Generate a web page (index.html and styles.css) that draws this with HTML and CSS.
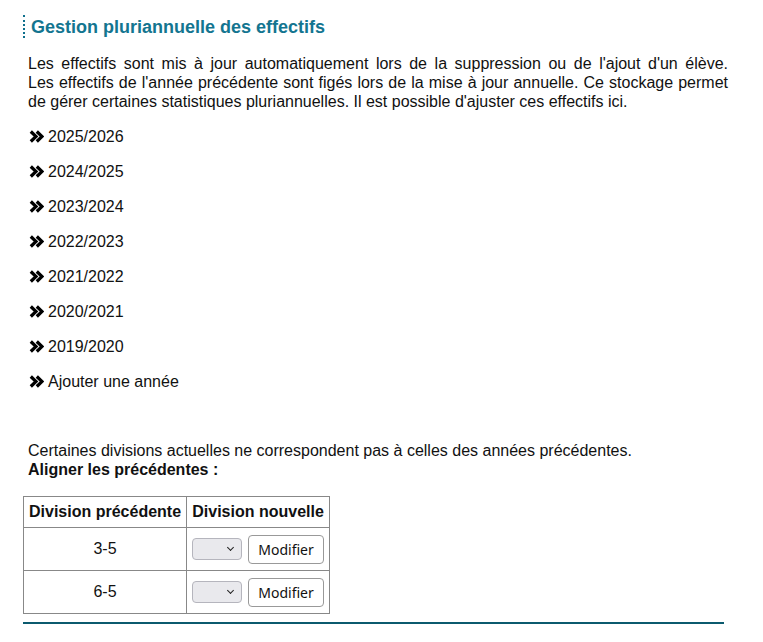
FILE: index.html
```html
<!DOCTYPE html>
<html>

<head>
  <meta charset="utf-8">
  <meta name="viewport" content="width=device-width, initial-scale=1">
  <title>Gestion pluriannuelle des effectifs</title>
  <link rel="stylesheet" href="styles.css">
</head>

<body>
  <div class="panel">
    <h2 class="titre">Gestion pluriannuelle des effectifs</h2>

    <div class="intro">
      <span class="ligne1">Les effectifs sont mis à jour automatiquement lors de la suppression ou de l'ajout d'un élève.</span>
      Les effectifs de l'année précédente sont figés lors de la mise à jour annuelle. Ce stockage permet
      de gérer certaines statistiques pluriannuelles. Il est possible d'ajuster ces effectifs ici.
    </div>

    <ul class="annees">
      <li><svg class="chev" viewBox="0 0 15 13"><path d="M1.8 1.5 7 6.5 1.8 11.5M7.8 1.5 13 6.5 7.8 11.5"/></svg>2025/2026</li>
      <li><svg class="chev" viewBox="0 0 15 13"><path d="M1.8 1.5 7 6.5 1.8 11.5M7.8 1.5 13 6.5 7.8 11.5"/></svg>2024/2025</li>
      <li><svg class="chev" viewBox="0 0 15 13"><path d="M1.8 1.5 7 6.5 1.8 11.5M7.8 1.5 13 6.5 7.8 11.5"/></svg>2023/2024</li>
      <li><svg class="chev" viewBox="0 0 15 13"><path d="M1.8 1.5 7 6.5 1.8 11.5M7.8 1.5 13 6.5 7.8 11.5"/></svg>2022/2023</li>
      <li><svg class="chev" viewBox="0 0 15 13"><path d="M1.8 1.5 7 6.5 1.8 11.5M7.8 1.5 13 6.5 7.8 11.5"/></svg>2021/2022</li>
      <li><svg class="chev" viewBox="0 0 15 13"><path d="M1.8 1.5 7 6.5 1.8 11.5M7.8 1.5 13 6.5 7.8 11.5"/></svg>2020/2021</li>
      <li><svg class="chev" viewBox="0 0 15 13"><path d="M1.8 1.5 7 6.5 1.8 11.5M7.8 1.5 13 6.5 7.8 11.5"/></svg>2019/2020</li>
      <li><svg class="chev" viewBox="0 0 15 13"><path d="M1.8 1.5 7 6.5 1.8 11.5M7.8 1.5 13 6.5 7.8 11.5"/></svg>Ajouter une année</li>
    </ul>

    <p class="aligner">Certaines divisions actuelles ne correspondent pas à celles des années précédentes.<br>
      <b>Aligner les précédentes :</b></p>

    <table class="tbl">
      <tr>
        <th>Division précédente</th>
        <th>Division nouvelle</th>
      </tr>
      <tr>
        <td class="center">3-5</td>
        <td>
          <div class="actions">
            <span class="selbox"><select class="sel"><option></option></select></span>
            <button class="btn">Modifier</button>
          </div>
        </td>
      </tr>
      <tr>
        <td class="center">6-5</td>
        <td>
          <div class="actions">
            <span class="selbox"><select class="sel"><option></option></select></span>
            <button class="btn">Modifier</button>
          </div>
        </td>
      </tr>
    </table>
  </div>
</body>

</html>
```

FILE: styles.css
```css
body {
  margin: 8px;
  font-family: "Liberation Sans", Arial, sans-serif;
  font-size: 16px;
  color: #111;
  background: #fff;
}

.panel {
  width: 701px;
  margin-left: 15px;
  border-bottom: 2px solid #0b5a6e;
  padding-bottom: 8px;
}

.titre {
  margin: 7px 0 0 0;
  padding: 3px 0 2px 6px;
  border-left: 2px dotted #0e6f8c;
  font-size: 18px;
  font-weight: bold;
  color: #137590;
  line-height: 18px;
}

.intro {
  margin: 16px -4px 0 5px;
  line-height: 19px;
  text-align: justify;
}

.ligne1 {
  display: block;
  text-align-last: justify;
}

.annees {
  list-style: none;
  margin: 16px 0 0 6px;
  padding: 0;
}

.annees li {
  height: 35px;
  line-height: 19px;
  display: flex;
  align-items: flex-start;
}

.chev {
  flex: none;
  width: 15px;
  height: 13px;
  margin: 3px 4px 0 0;
  fill: none;
  stroke: #000;
  stroke-width: 3.2;
}

.aligner {
  margin: 34px 0 0 5px;
  line-height: 19px;
}

.tbl {
  margin-top: 17px;
  border-collapse: collapse;
}

.tbl th,
.tbl td {
  border: 1px solid #888;
  padding: 5px 5px;
}

.tbl th {
  font-weight: bold;
  height: 20px;
}

.tbl td {
  height: 32px;
}

.center {
  text-align: center;
}

.actions {
  display: flex;
  align-items: center;
  gap: 6px;
}

.selbox {
  display: block;
  position: relative;
}

.selbox::after {
  content: "";
  position: absolute;
  right: 9px;
  top: 7px;
  width: 4px;
  height: 4px;
  border-right: 1.5px solid #222;
  border-bottom: 1.5px solid #222;
  transform: rotate(45deg);
  pointer-events: none;
}

.sel {
  -webkit-appearance: none;
  appearance: none;
  display: block;
  width: 50px;
  height: 22px;
  background: #e9e9ed;
  border: 1px solid #b5b5bd;
  border-radius: 4px;
}

.btn {
  font-family: "Noto Sans", sans-serif;
  font-size: 14px;
  width: 76px;
  height: 29px;
  padding: 0;
  background: #fff;
  border: 1px solid #999;
  border-radius: 4px;
  color: #111;
}
```
